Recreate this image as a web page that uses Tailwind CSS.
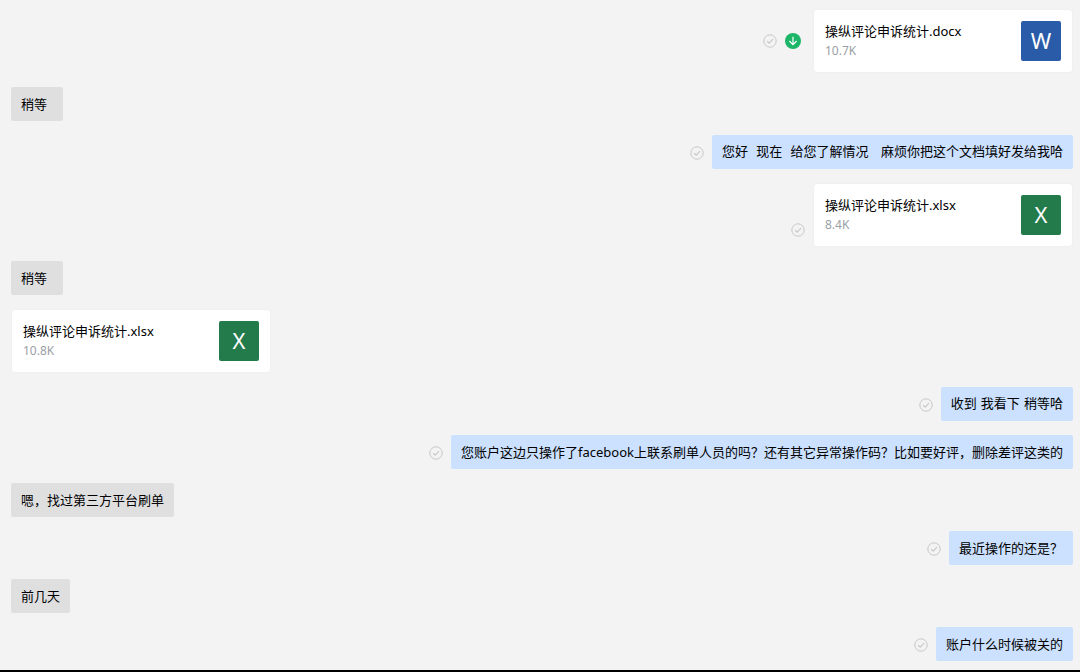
<!DOCTYPE html>
<html lang="zh-CN">
<head>
  <meta charset="UTF-8" />
  <meta name="viewport" content="width=device-width, initial-scale=1" />
  <title>聊天记录</title>
  <script src="https://cdn.jsdelivr.net/npm/@tailwindcss/browser@4"></script>
</head>
<body class="bg-[#f3f3f3] font-['Noto_Sans','Noto_Sans_CJK_SC',sans-serif] text-[13px] leading-5 text-black">

  <!-- shared icons -->
  <svg class="hidden">
    <symbol id="read" viewBox="0 0 14 14">
      <circle cx="7" cy="7" r="6.2" fill="none" stroke="currentColor" />
      <path d="M4.2 7.2 6.2 9.1 10 5.2" fill="none" stroke="currentColor" stroke-width="1.2" />
    </symbol>
    <symbol id="download" viewBox="0 0 16 16">
      <circle cx="8" cy="8" r="8" fill="#1db568" />
      <path d="M8 3.8v7.6M4.4 8 8 11.6 11.6 8" fill="none" stroke="#ffffff" stroke-width="1.2" />
    </symbol>
  </svg>

  <main class="min-h-screen border-b-2 border-black">
    <div class="flex flex-col gap-3.5 pt-[9px] pb-[9px] pl-[11px] pr-[7px]">

      <div class="flex items-center justify-end gap-2">
        <svg class="w-3.5 h-3.5 text-[#c8c8c8]"><use href="#read" /></svg>
        <button type="button" aria-label="下载" class="mr-1"><svg class="block w-4 h-4"><use href="#download" /></svg></button>
        <a href="#" class="flex w-[260px] justify-between rounded-sm border border-[#f0f0f0] bg-white p-[11px]">
          <span class="flex flex-col">
            <span>操纵评论申诉统计.docx</span>
            <span class="text-xs leading-5 text-[#9a9fa6]">10.7K</span>
          </span>
          <span class="flex size-10 items-center justify-center rounded-xs bg-[#2a5ba8] pb-0.5 text-[22px] text-white">W</span>
        </a>
      </div>

      <div class="flex">
        <p class="min-w-[52px] rounded-xs bg-[#dfdfe0] px-2.5 py-[7px]">稍等</p>
      </div>

      <div class="flex items-end justify-end gap-2">
        <svg class="mb-[9px] w-3.5 h-3.5 shrink-0 text-[#c8c8c8]"><use href="#read" /></svg>
        <p class="rounded-xs bg-[#cce1ff] px-2.5 py-[7px] whitespace-pre-wrap font-['DejaVu_Sans','Noto_Sans_CJK_SC',sans-serif]">您好  现在  给您了解情况   麻烦你把这个文档填好发给我哈</p>
      </div>

      <div class="flex items-end justify-end gap-2">
        <svg class="mb-2.5 w-3.5 h-3.5 text-[#c8c8c8]"><use href="#read" /></svg>
        <a href="#" class="flex w-[260px] justify-between rounded-sm border border-[#f0f0f0] bg-white p-[11px]">
          <span class="flex flex-col">
            <span>操纵评论申诉统计.xlsx</span>
            <span class="text-xs leading-5 text-[#9a9fa6]">8.4K</span>
          </span>
          <span class="flex size-10 items-center justify-center rounded-xs bg-[#237a4b] pb-0.5 text-[22px] text-white">X</span>
        </a>
      </div>

      <div class="flex">
        <p class="min-w-[52px] rounded-xs bg-[#dfdfe0] px-2.5 py-[7px]">稍等</p>
      </div>

      <div class="flex">
        <a href="#" class="flex w-[260px] justify-between rounded-sm border border-[#f0f0f0] bg-white p-[11px]">
          <span class="flex flex-col">
            <span>操纵评论申诉统计.xlsx</span>
            <span class="text-xs leading-5 text-[#9a9fa6]">10.8K</span>
          </span>
          <span class="flex size-10 items-center justify-center rounded-xs bg-[#237a4b] pb-0.5 text-[22px] text-white">X</span>
        </a>
      </div>

      <div class="flex items-end justify-end gap-2">
        <svg class="mb-[9px] w-3.5 h-3.5 shrink-0 text-[#c8c8c8]"><use href="#read" /></svg>
        <p class="rounded-xs bg-[#cce1ff] px-2.5 py-[7px] font-['DejaVu_Sans','Noto_Sans_CJK_SC',sans-serif]">收到 我看下 稍等哈</p>
      </div>

      <div class="flex items-end justify-end gap-2">
        <svg class="mb-[9px] w-3.5 h-3.5 shrink-0 text-[#c8c8c8]"><use href="#read" /></svg>
        <p class="rounded-xs bg-[#cce1ff] px-2.5 py-[7px]">您账户这边只操作了facebook上联系刷单人员的吗？还有其它异常操作码？比如要好评，删除差评这类的</p>
      </div>

      <div class="flex">
        <p class="rounded-xs bg-[#dfdfe0] px-2.5 py-[7px]">嗯，找过第三方平台刷单</p>
      </div>

      <div class="flex items-end justify-end gap-2">
        <svg class="mb-[9px] w-3.5 h-3.5 shrink-0 text-[#c8c8c8]"><use href="#read" /></svg>
        <p class="rounded-xs bg-[#cce1ff] px-2.5 py-[7px]">最近操作的还是？</p>
      </div>

      <div class="flex">
        <p class="rounded-xs bg-[#dfdfe0] px-2.5 py-[7px]">前几天</p>
      </div>

      <div class="flex items-end justify-end gap-2">
        <svg class="mb-[9px] w-3.5 h-3.5 shrink-0 text-[#c8c8c8]"><use href="#read" /></svg>
        <p class="rounded-xs bg-[#cce1ff] px-2.5 py-[7px]">账户什么时候被关的</p>
      </div>

    </div>
  </main>

</body>
</html>
